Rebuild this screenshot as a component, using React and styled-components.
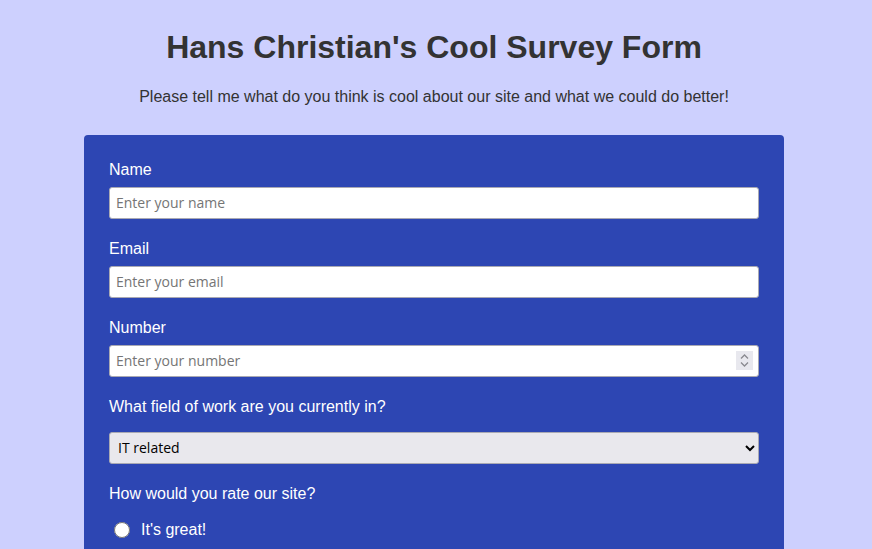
import React from "react";
import styled, { createGlobalStyle } from "styled-components";

const GlobalStyle = createGlobalStyle`
  body {
    margin: 0;
    background-color: #cdd0fe;
    font-family: "Liberation Sans", Arial, sans-serif;
    color: #333;
  }
`;

const Page = styled.div`
  display: flex;
  flex-direction: column;
  align-items: center;
  padding: 29px 4px 0 0;
`;

const Title = styled.h1`
  margin: 0;
  font-size: 32px;
  line-height: 37px;
  font-weight: 700;
  text-align: center;
`;

const Description = styled.p`
  margin: 22px 0 0;
  font-size: 16px;
  line-height: 18px;
  text-align: center;
`;

const Form = styled.form`
  width: 700px;
  box-sizing: border-box;
  margin-top: 29px;
  padding: 25px 25px 40px;
  background-color: #2d46b3;
  border-radius: 4px;
  color: #fff;
`;

const Group = styled.div`
  display: flex;
  flex-direction: column;
  margin-bottom: 20px;
`;

const Label = styled.label`
  font-size: 16px;
  line-height: 18px;
  padding-top: 1px;
  margin-bottom: ${(p) => p.$gap ?? 8}px;
`;

const Input = styled.input`
  box-sizing: border-box;
  width: 100%;
  height: 32px;
  padding: 0 6px 1px;
  border: 1px solid #a9a9b3;
  border-radius: 3px;
  background: #fff;
  font-family: "Open Sans", sans-serif;
  font-size: 14px;
  color: #222;
  &::placeholder {
    color: #757575;
  }
  &:focus {
    outline: none;
  }
`;

const InputWrap = styled.div`
  position: relative;
`;

const Spinner = styled.span`
  position: absolute;
  right: 6px;
  top: 6px;
  width: 17px;
  height: 19px;
  background: #e8e8ee;
  display: flex;
  align-items: center;
  justify-content: center;
  pointer-events: none;
`;

const Select = styled.select`
  box-sizing: border-box;
  width: 100%;
  height: 32px;
  padding: 0 4px 1px;
  border: 1px solid #a9a9b3;
  border-radius: 3px;
  background: #e9e8ed;
  font-family: "Open Sans", sans-serif;
  font-size: 14px;
  color: #000;
`;

const RadioList = styled.div`
  display: flex;
  flex-direction: column;
  gap: 18px;
  margin-top: 18px;
`;

const RadioRow = styled.label`
  display: flex;
  align-items: center;
  gap: 11px;
  padding-left: 5px;
  font-size: 16px;
  line-height: 18px;
`;

const Radio = styled.input`
  margin: 0;
  width: 16px;
  height: 16px;
`;

export default function App() {
  return (
    <>
      <GlobalStyle />
      <Page>
        <Title>Hans Christian's Cool Survey Form</Title>
        <Description>
          Please tell me what do you think is cool about our site and what we could do better!
        </Description>
        <Form onSubmit={(e) => e.preventDefault()}>
          <Group>
            <Label htmlFor="name">Name</Label>
            <Input id="name" type="text" placeholder="Enter your name" />
          </Group>
          <Group>
            <Label htmlFor="email">Email</Label>
            <Input id="email" type="email" placeholder="Enter your email" />
          </Group>
          <Group>
            <Label htmlFor="number">Number</Label>
            <InputWrap>
              <Input id="number" type="text" inputMode="numeric" placeholder="Enter your number" />
              <Spinner>
                <svg width="11" height="15" viewBox="0 0 11 15" fill="none" stroke="#8a8a90" strokeWidth="1.3">
                  <path d="M2 5.5 L5.5 2 L9 5.5" />
                  <path d="M2 9.5 L5.5 13 L9 9.5" />
                </svg>
              </Spinner>
            </InputWrap>
          </Group>
          <Group>
            <Label htmlFor="work" $gap={16}>What field of work are you currently in?</Label>
            <Select id="work" defaultValue="it">
              <option value="it">IT related</option>
              <option value="design">Design</option>
              <option value="other">Other</option>
            </Select>
          </Group>
          <Group>
            <Label as="span" $gap={0}>How would you rate our site?</Label>
            <RadioList>
              <RadioRow>
                <Radio type="radio" name="rating" value="great" />
                It's great!
              </RadioRow>
              <RadioRow>
                <Radio type="radio" name="rating" value="ok" />
                It's ok
              </RadioRow>
            </RadioList>
          </Group>
        </Form>
      </Page>
    </>
  );
}
